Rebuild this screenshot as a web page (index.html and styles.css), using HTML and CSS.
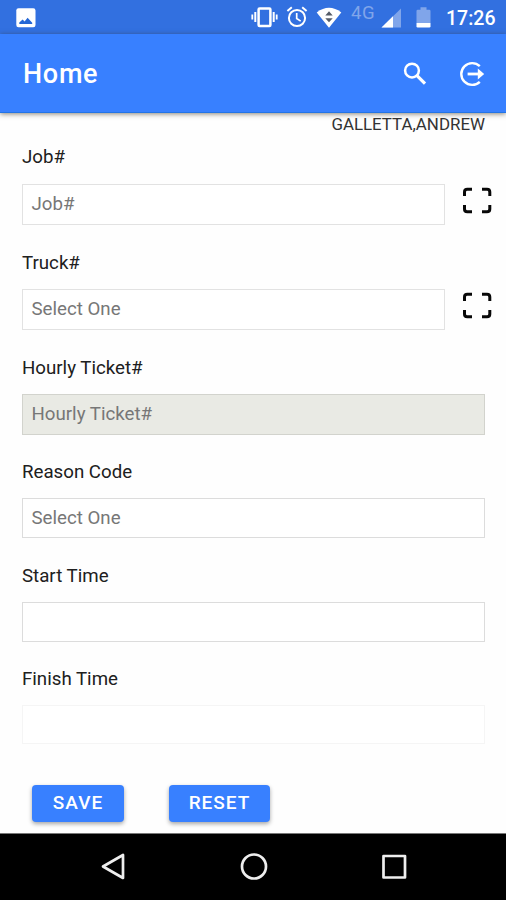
FILE: index.html
```html
<!DOCTYPE html>
<html lang="en">
<head>
<meta charset="utf-8">
<title>Home</title>
<link rel="stylesheet" href="styles.css">
</head>
<body>
<div class="status">
  <svg class="photo" width="20" height="20" viewBox="0 0 20 20"><rect x=".3" y=".3" width="19.2" height="19" rx="2.2" fill="#fff"/><path d="M3.300 16v-1.500l3.300-3 2 2 3-3.700 4.600 5v1.200z" fill="#2467d6"/></svg>
  <svg class="vibrate" width="27" height="22" viewBox="0 0 27 22" fill="none" stroke="#fff"><rect x="7.6" y="2.4" width="11.8" height="17.6" rx="1" stroke-width="2.5"/><path d="M4.3 6v10M22.7 6v10" stroke-width="2"/><path d="M1.3 8.4v5M25.7 8.4v5" stroke-width="1.8"/></svg>
  <svg class="alarm" width="22" height="22" viewBox="0 0 22 22" fill="none" stroke="#fff" stroke-width="2"><circle cx="11" cy="12" r="8.1"/><path d="M1.4 5l4.4-3.7M20.6 5l-4.4-3.7"/><path d="M10.7 7v5.5l4 2.6" stroke-width="1.7"/></svg>
  <svg class="wifi" width="26" height="22" viewBox="0 0 26 22"><path d="M.7 5.4Q13-3.8 25.3 5.4L13 20.8z" fill="#fff"/><path d="M9.3 8.5L13 4.3l3.7 4.2zM9.3 11.2h7.4L13 15.3z" fill="#555c68"/></svg>
  <span class="network">4G</span>
  <svg class="signal" width="20" height="20" viewBox="0 0 20 20"><path d="M.5 19.5L20 .5v19z" fill="#80a5ea"/><path d="M.5 19.5L12 8.3v11.2z" fill="#fff"/></svg>
  <svg class="battery" width="15" height="21" viewBox="0 0 15 21"><path d="M4.5.3h6v2.4h2.7q1.3 0 1.3 1.3V16H.5V4q0-1.3 1.3-1.3h2.7z" fill="#80a5ea"/><path d="M.5 16h14v3.3q0 1.2-1.2 1.2H1.7q-1.2 0-1.2-1.2z" fill="#fff"/></svg>
  <span class="clock">17:26</span>
</div>
<header class="toolbar">
  <h1>Home</h1>
  <svg class="search" width="24" height="24" viewBox="0 0 24 24" fill="none" stroke="#fff"><circle cx="9" cy="8.6" r="6.9" stroke-width="2.5"/><path d="M14 13.7l8 8" stroke-width="3.1"/></svg>
  <svg class="logout" width="26" height="26" viewBox="0 0 26 26" fill="none" stroke="#fff" stroke-width="2.4"><path d="M20.800 5.200A10.900 10.900 0 1 0 20.800 20.800"/><path d="M8.600 13h13" stroke-width="2.800"/><path d="M18.800 7.400l6.400 5.600-6.400 5.600z" fill="#fff" stroke="none"/></svg>
</header>
<main class="form">
  <div class="user">GALLETTA,ANDREW</div>
  <div class="field"><label>Job#</label><div class="line"><div class="box">Job#</div>
    <svg class="scan" width="30" height="28" viewBox="0 0 30 28" fill="none" stroke="#080808" stroke-width="3"><path d="M2.500 9V5q0-2.800 2.800-2.800H10M20 2.200h5Q27.800 2.200 27.800 5v4M27.800 18v4q0 2.800-2.800 2.800H20M10 24.800H5.300Q2.500 24.800 2.500 22v-4"/></svg></div></div>
  <div class="field second"><label>Truck#</label><div class="line"><div class="box">Select One</div>
    <svg class="scan" width="30" height="28" viewBox="0 0 30 28" fill="none" stroke="#080808" stroke-width="3"><path d="M2.500 9V5q0-2.800 2.800-2.800H10M20 2.200h5Q27.800 2.200 27.800 5v4M27.800 18v4q0 2.800-2.800 2.800H20M10 24.800H5.300Q2.500 24.800 2.500 22v-4"/></svg></div></div>
  <div class="field short"><label>Hourly Ticket#</label><div class="box disabled">Hourly Ticket#</div></div>
  <div class="field short"><label>Reason Code</label><div class="box mid">Select One</div></div>
  <div class="field last"><label>Start Time</label><div class="box mid"></div></div>
  <div class="field"><label>Finish Time</label><div class="box faint"></div></div>
</main>
<div class="actions"><button class="save">SAVE</button><button class="reset">RESET</button></div>
<nav class="nav">
  <svg width="28" height="30" viewBox="0 0 28 30" fill="none" stroke="#eee" stroke-width="2.7" stroke-linejoin="round"><path d="M4 14.500L24 3v23z"/></svg>
  <svg width="28" height="30" viewBox="0 0 28 30" fill="none" stroke="#eee" stroke-width="2.700"><circle cx="14" cy="14.500" r="12"/></svg>
  <svg width="28" height="30" viewBox="0 0 28 30" fill="none" stroke="#eee" stroke-width="2.700" stroke-linejoin="round"><rect x="3.500" y="4" width="21.500" height="21.500"/></svg>
</nav>
</body>
</html>
```
FILE: styles.css
```css
* { box-sizing: border-box; }
body {
  margin: 0;
  width: 506px;
  height: 900px;
  display: flex;
  flex-direction: column;
  overflow: hidden;
  background: #fefefe;
  color: #202020;
  font-family: Roboto, "Liberation Sans", sans-serif;
}
svg { display: block; flex: none; }
.status {
  height: 34px;
  flex: none;
  display: flex;
  align-items: flex-start;
  background: #3270e0;
  color: #fff;
}
.photo { margin: 8px 0 0 16px; }
.vibrate { margin: 6px 0 0 215px; }
.alarm { margin: 6px 0 0 8px; }
.wifi { margin: 7px 0 0 8px; }
.network {
  width: 30px;
  margin: 3px 0 0 9px;
  font-size: 18.5px;
  line-height: 20px;
  letter-spacing: 0.5px;
  color: #80a5ea;
}
.signal { margin-top: 8px; }
.battery { margin: 7px 0 0 15px; }
.clock {
  margin: 7px 0 0 15px;
  font-size: 19.5px;
  line-height: 24px;
  font-weight: 500;
}
.toolbar {
  height: 79px;
  flex: none;
  display: flex;
  align-items: center;
  padding: 2px 21px 0 23px;
  background: #3880ff;
  border-bottom: 1px solid #2374e6;
  box-shadow: 0 1px 5px rgba(60, 50, 30, 0.6);
  color: #fff;
}
.toolbar h1 {
  flex: 1;
  margin: 0;
  font-size: 27px;
  line-height: 32px;
  font-weight: 500;
  letter-spacing: 0.7px;
}
.search { margin-right: 32px; }
.form { padding: 0 21px 0 22px; }
.user {
  height: 31px;
  padding-top: 1px;
  text-align: right;
  font-size: 16.9px;
  line-height: 21px;
  color: #333;
}
.field { height: 105.5px; }
.field.second { height: 105px; }
.field.short { height: 104px; }
.field.last { height: 103px; }
.field label {
  display: block;
  height: 40px;
  font-size: 18.7px;
  line-height: 27px;
}
.field:not(:nth-child(2)) label { height: 39.4px; }
.line { display: flex; align-items: flex-start; margin-right: -8px; }
.line .box { flex: 1; }
.scan { margin: 3px 1px 0 17px; }
.box {
  height: 41px;
  padding-left: 8.5px;
  border: 1px solid #e2e2e2;
  background: #fff;
  font-size: 18.7px;
  line-height: 39px;
  color: #777;
}
.box.mid { height: 40px; border-color: #dcdcdc; }
.box.disabled { background: #e9eae4; border-color: #d2d3cd; }
.box.faint { height: 39px; border-color: #f5f5f5; }
.actions {
  margin-top: auto;
  height: 48px;
  flex: none;
  display: flex;
  gap: 45px;
  padding-left: 32px;
}
.actions button {
  height: 37px;
  padding: 0 0 2px;
  border: 0;
  border-radius: 4px;
  background: #3880ff;
  box-shadow: 0 2px 4px rgba(0, 0, 0, 0.35);
  color: #fff;
  font-family: inherit;
  font-size: 19px;
  font-weight: 500;
  letter-spacing: 1px;
}
.save { width: 92px; }
.reset { width: 101px; }
.nav {
  height: 67px;
  flex: none;
  display: flex;
  justify-content: center;
  align-items: center;
  gap: 112.5px;
  padding-left: 1px;
  background: #000;
  border-top: 1px solid #777;
}
```
